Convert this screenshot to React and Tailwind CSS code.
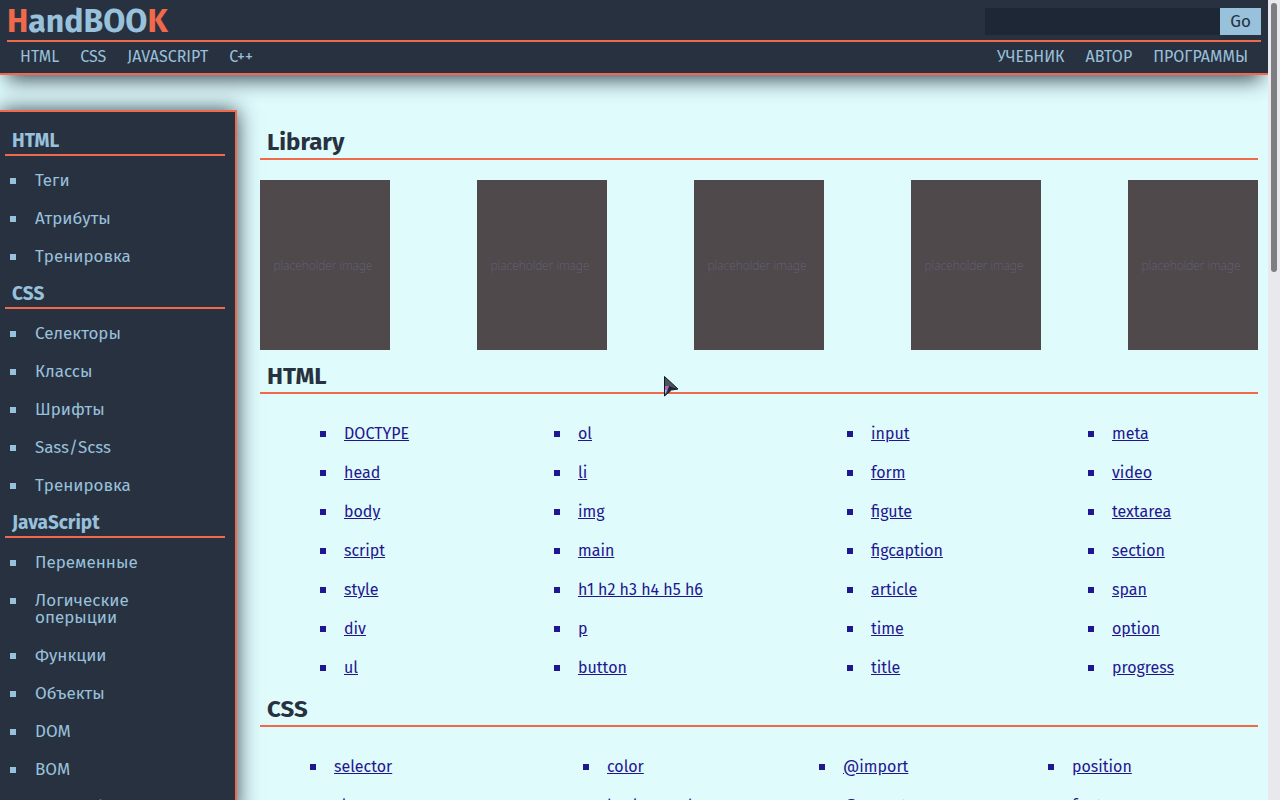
const sidebar = [
  { title: "HTML", items: ["Теги", "Атрибуты", "Тренировка"] },
  { title: "CSS", items: ["Селекторы", "Классы", "Шрифты", "Sass/Scss", "Тренировка"] },
  {
    title: "JavaScript",
    items: ["Переменные", "Логические оперыции", "Функции", "Объекты", "DOM", "BOM", "Math object"],
  },
];

const htmlColumns = [
  ["DOCTYPE", "head", "body", "script", "style", "div", "ul"],
  ["ol", "li", "img", "main", "h1 h2 h3 h4 h5 h6", "p", "button"],
  ["input", "form", "figute", "figcaption", "article", "time", "title"],
  ["meta", "video", "textarea", "section", "span", "option", "progress"],
];

const cssColumns = [
  ["selector", "class"],
  ["color", "background"],
  ["@import", "@export"],
  ["position", "font"],
];

function NavLinks({ links }) {
  return (
    <ul className="flex gap-[21px] text-base leading-5">
      {links.map((link) => (
        <li key={link}>
          <a href="#">{link}</a>
        </li>
      ))}
    </ul>
  );
}

function SectionTitle({ children }) {
  return (
    <h2 className="border-b-2 border-[#f0694a] px-[7px] pt-3 pb-0.5 text-2xl leading-7 font-bold">
      {children}
    </h2>
  );
}

function Columns({ columns, className }) {
  return (
    <div className={"grid pt-[30px] pb-1.5 text-[#1f1690] " + className}>
      {columns.map((column) => (
        <ul key={column[0]} className="flex flex-col gap-5">
          {column.map((item) => (
            <li key={item} className="flex gap-[18px] leading-[19px]">
              <span className="mt-[7px] size-1.5 shrink-0 bg-[#1f1690]" />
              <a href="#" className="underline">
                {item}
              </a>
            </li>
          ))}
        </ul>
      ))}
    </div>
  );
}

export default function App() {
  return (
    <div className="flex h-screen overflow-hidden bg-[#dffbfc] font-['Fira_Sans','Noto_Sans',sans-serif] text-base text-[#283140]">
      <div className="flex min-w-0 flex-1 flex-col overflow-hidden">
        <header className="border-b-2 border-[#f0694a] bg-[#283140] px-[7px] text-[#98c1dc] shadow-[0_12px_20px_-7px_rgba(40,49,64,0.85)]">
          <div className="flex h-[42px] items-center justify-between border-b-2 border-[#f0694a]">
            <h1 className="pt-0.5 text-[32px] leading-[38px] font-bold">
              <span className="text-[#f0694a]">H</span>andBOO<span className="text-[#f0694a]">K</span>
            </h1>
            <form className="mt-0.5 flex h-[27px]" onSubmit={(e) => e.preventDefault()}>
              <input aria-label="Search" className="w-[235px] bg-[#1e2735] px-2 outline-none" />
              <button className="w-[41px] bg-[#98c1dc] pt-0.5 text-[17px] leading-5 text-[#283140]">Go</button>
            </form>
          </div>
          <nav className="flex h-[31px] items-center justify-between px-[13px] pb-0.5">
            <NavLinks links={["HTML", "CSS", "JAVASCRIPT", "C++"]} />
            <NavLinks links={["УЧЕБНИК", "АВТОР", "ПРОГРАММЫ"]} />
          </nav>
        </header>

        <div className="flex min-h-0 flex-1 pr-2.5">
          <aside className="mt-[35px] w-[237px] shrink-0 self-start border-t-2 border-r-2 border-[#f0694a] bg-[#283140] pr-2.5 pl-[5px] text-[17px] text-[#98c1dc] shadow-[0_0_20px_rgba(40,49,64,0.9)]">
            {sidebar.map((group) => (
              <section key={group.title}>
                <h3 className="border-b-2 border-[#f0694a] px-[7px] pt-[18px] pb-0.5 text-[19px] leading-[22px] font-bold">
                  {group.title}
                </h3>
                <ul className="flex flex-col gap-[21px] pt-4 pl-[5px]">
                  {group.items.map((item) => (
                    <li key={item} className="flex gap-[19px] leading-[17px]">
                      <span className="mt-1.5 size-1.5 shrink-0 bg-[#98c1dc]" />
                      <a href="#" className="max-w-[140px]">
                        {item}
                      </a>
                    </li>
                  ))}
                </ul>
              </section>
            ))}
          </aside>

          <main className="ml-[23px] min-w-0 flex-1 pt-[41px]">
            <SectionTitle>Library</SectionTitle>
            <div className="mt-5 flex justify-between">
              {[1, 2, 3, 4, 5].map((n) => (
                <div
                  key={n}
                  className="flex h-[170px] w-[130px] items-center justify-center bg-[#4f494c] pt-0.5 pr-1 font-['Noto_Sans',sans-serif] text-xs font-extralight text-[#66627a]"
                >
                  placeholder image
                </div>
              ))}
            </div>
            <SectionTitle>HTML</SectionTitle>
            <Columns columns={htmlColumns} className="grid-cols-[234fr_293fr_241fr_170fr] pl-[60px]" />
            <SectionTitle>CSS</SectionTitle>
            <Columns columns={cssColumns} className="grid-cols-[273fr_236fr_229fr_210fr] pl-[50px]" />
          </main>
        </div>
      </div>

      <div className="w-3 shrink-0 bg-[#e9e9ed] px-[3px] pt-[3px]">
        <div className="h-[269px] rounded-full bg-[#7c7e82]" />
      </div>

      <svg className="pointer-events-none absolute top-[375px] left-[663px]" width="17" height="23" viewBox="0 0 17 23">
        <path d="M1.5 1.5 L15 14 L8.5 15 L1.5 21 Z" fill="#4b5461" stroke="#101820" strokeWidth="1" />
        <path d="M6 11 L14 14 L8 14.500 L4 18 Z" fill="#1c242e" />
        <path d="M2 11 L6 11 L4.500 15 L2 19 Z" fill="#c05bc0" />
        <path d="M2 15 L4 15 L2 19 Z" fill="#7fd0ea" />
      </svg>
    </div>
  );
}
